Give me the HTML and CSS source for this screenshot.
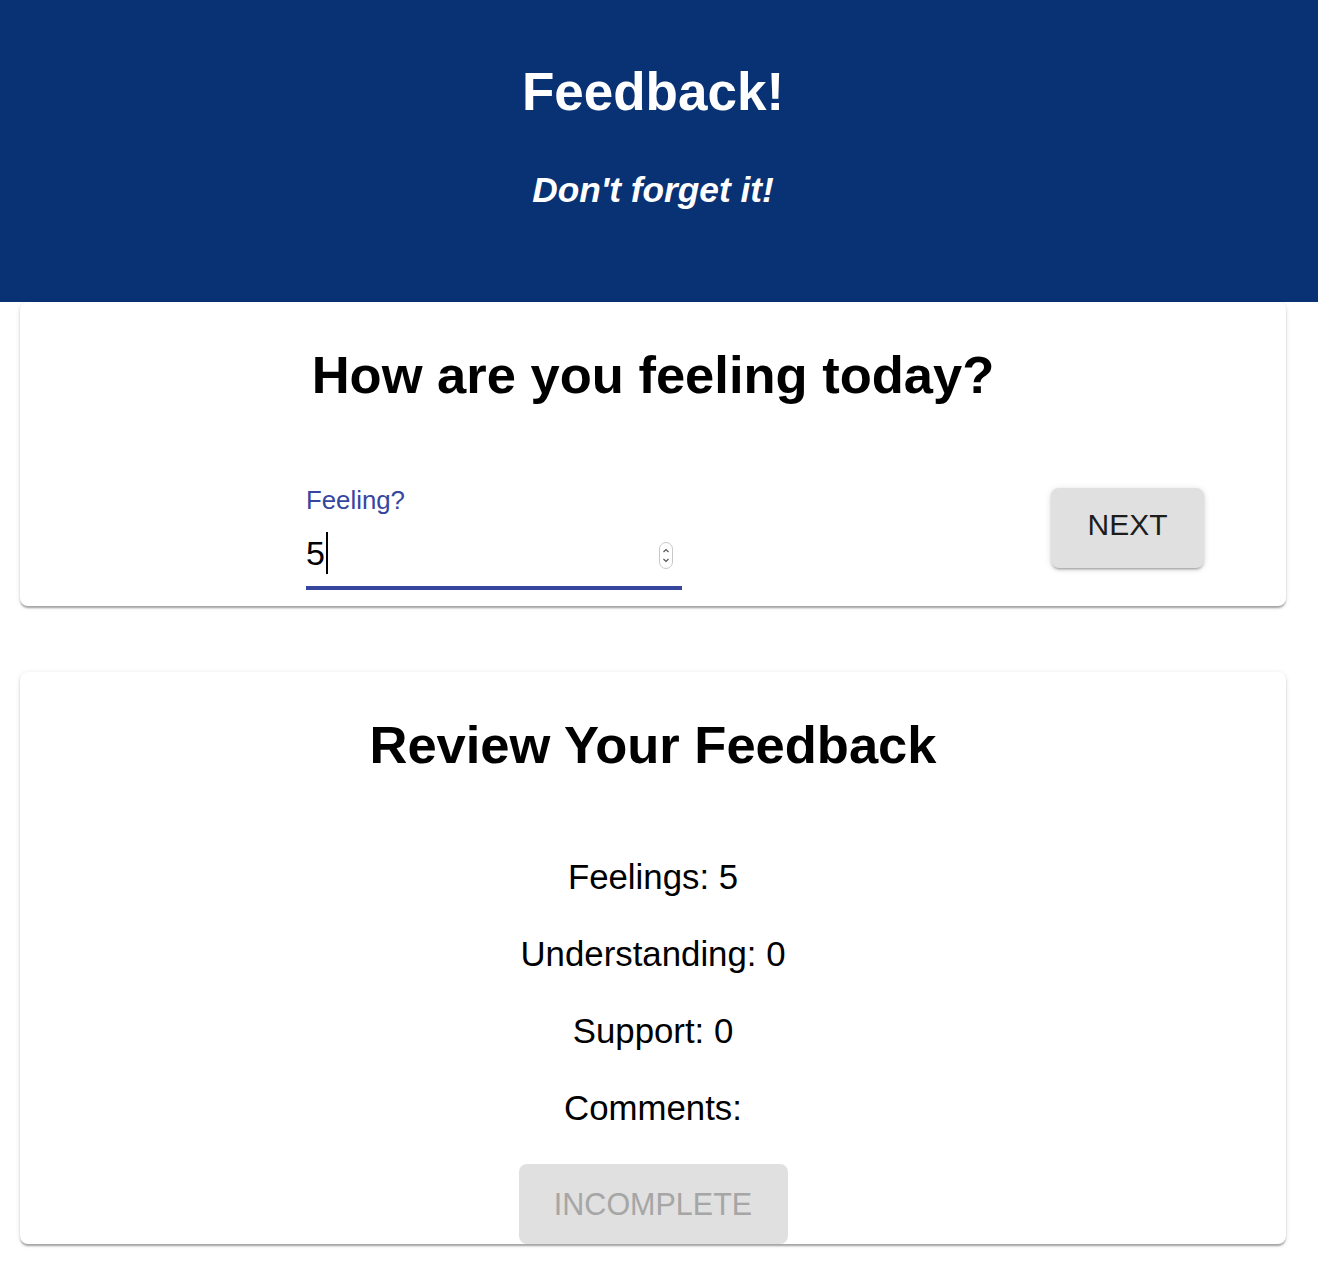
FILE: index.html
```html
<!DOCTYPE html>
<html lang="en">
<head>
<meta charset="utf-8">
<title>Feedback!</title>
<link rel="stylesheet" href="styles.css">
</head>
<body>
<header class="app-header">
  <h1 class="app-title">Feedback!</h1>
  <h2 class="app-subtitle">Don't forget it!</h2>
</header>
<main class="content">
  <section class="card card-question">
    <h2 class="card-title">How are you feeling today?</h2>
    <div class="form-row">
      <div class="field">
        <label class="field-label">Feeling?</label>
        <div class="field-input">
          <span class="field-value">5<span class="caret"></span></span>
          <span class="spinner">
            <svg width="14" height="27" viewBox="0 0 14 27">
              <rect x="0.5" y="0.5" width="13" height="26" rx="6.5" fill="#fff" stroke="#c8c8c8"/>
              <path d="M4.5 10 L7 7.5 L9.5 10" fill="none" stroke="#555" stroke-width="1.2"/>
              <path d="M4.5 17 L7 19.5 L9.5 17" fill="none" stroke="#555" stroke-width="1.2"/>
            </svg>
          </span>
        </div>
      </div>
      <button class="btn btn-next" type="button">NEXT</button>
    </div>
  </section>
  <section class="card card-review">
    <h2 class="card-title">Review Your Feedback</h2>
    <div class="review-list">
      <p class="review-item">Feelings: 5</p>
      <p class="review-item">Understanding: 0</p>
      <p class="review-item">Support: 0</p>
      <p class="review-item">Comments:</p>
    </div>
    <button class="btn btn-disabled" type="button" disabled>INCOMPLETE</button>
  </section>
</main>
</body>
</html>
```

FILE: styles.css
```css
html, body {
  margin: 0;
  padding: 0;
  background: #ffffff;
}

body {
  font-family: "Liberation Sans", Arial, Helvetica, sans-serif;
  color: #000;
}

.app-header {
  height: 302px;
  background: #083273;
  color: #ffffff;
  text-align: center;
  box-sizing: border-box;
  padding: 62px 12px 0 0;
}

.app-title {
  margin: 0;
  font-size: 53px;
  line-height: 60px;
  font-weight: bold;
}

.app-subtitle {
  margin: 48px 0 0;
  font-size: 35.3px;
  line-height: 40px;
  font-weight: bold;
  font-style: italic;
}

.content {
  padding: 0 32px 24px 20px;
  display: flex;
  flex-direction: column;
  gap: 66px;
}

.card {
  background: #fff;
  border-radius: 8px;
  box-shadow: 0 3px 2px -1px rgba(0,0,0,0.2), 0 2px 2px 0 rgba(0,0,0,0.14), 0 1px 5px 0 rgba(0,0,0,0.12);
  padding-top: 43px;
}

.card-title {
  margin: 0;
  text-align: center;
  font-size: 52.5px;
  line-height: 60px;
  font-weight: bold;
}

.card-question {
  padding-bottom: 16px;
}

.form-row {
  margin-top: 80px;
  display: flex;
  justify-content: space-between;
  align-items: flex-start;
  padding: 0 82px 0 286px;
}

.field {
  width: 376px;
}

.field-label {
  display: block;
  font-size: 25.8px;
  line-height: 30px;
  color: #3646a0;
}

.field-input {
  margin-top: 16px;
  height: 59px;
  box-sizing: border-box;
  border-bottom: 4px solid #35469c;
  display: flex;
  justify-content: space-between;
  align-items: flex-start;
}

.field-value {
  font-size: 34px;
  line-height: 44px;
  color: #000;
  display: flex;
  align-items: flex-start;
}

.caret {
  display: inline-block;
  width: 2px;
  height: 42px;
  background: #000;
  margin-left: 1px;
  margin-top: 1px;
}

.spinner {
  display: block;
  margin: 11px 9px 0 0;
  height: 27px;
}

.spinner svg {
  display: block;
}

.btn {
  font-family: "Liberation Sans", Arial, Helvetica, sans-serif;
  font-size: 30px;
  border: none;
  border-radius: 8px;
  background: #e0e0e0;
  padding: 0;
  height: 80px;
  box-sizing: border-box;
}

.btn-next {
  width: 153px;
  margin-top: 3px;
  color: #1d1d1d;
  line-height: 74px;
  padding-bottom: 6px;
  box-shadow: 0 3px 2px -2px rgba(0,0,0,0.2), 0 2px 3px 0 rgba(0,0,0,0.14), 0 1px 7px 0 rgba(0,0,0,0.12);
}

.card-review {
  display: flex;
  flex-direction: column;
  align-items: center;
}

.review-list {
  margin-top: 82px;
  display: flex;
  flex-direction: column;
  align-items: center;
  gap: 37px;
}

.review-item {
  margin: 0;
  font-size: 34.8px;
  line-height: 40px;
}

.btn-disabled {
  margin-top: 36px;
  width: 269px;
  font-size: 30.5px;
  line-height: 80px;
  color: #a6a6a6;
}
```
